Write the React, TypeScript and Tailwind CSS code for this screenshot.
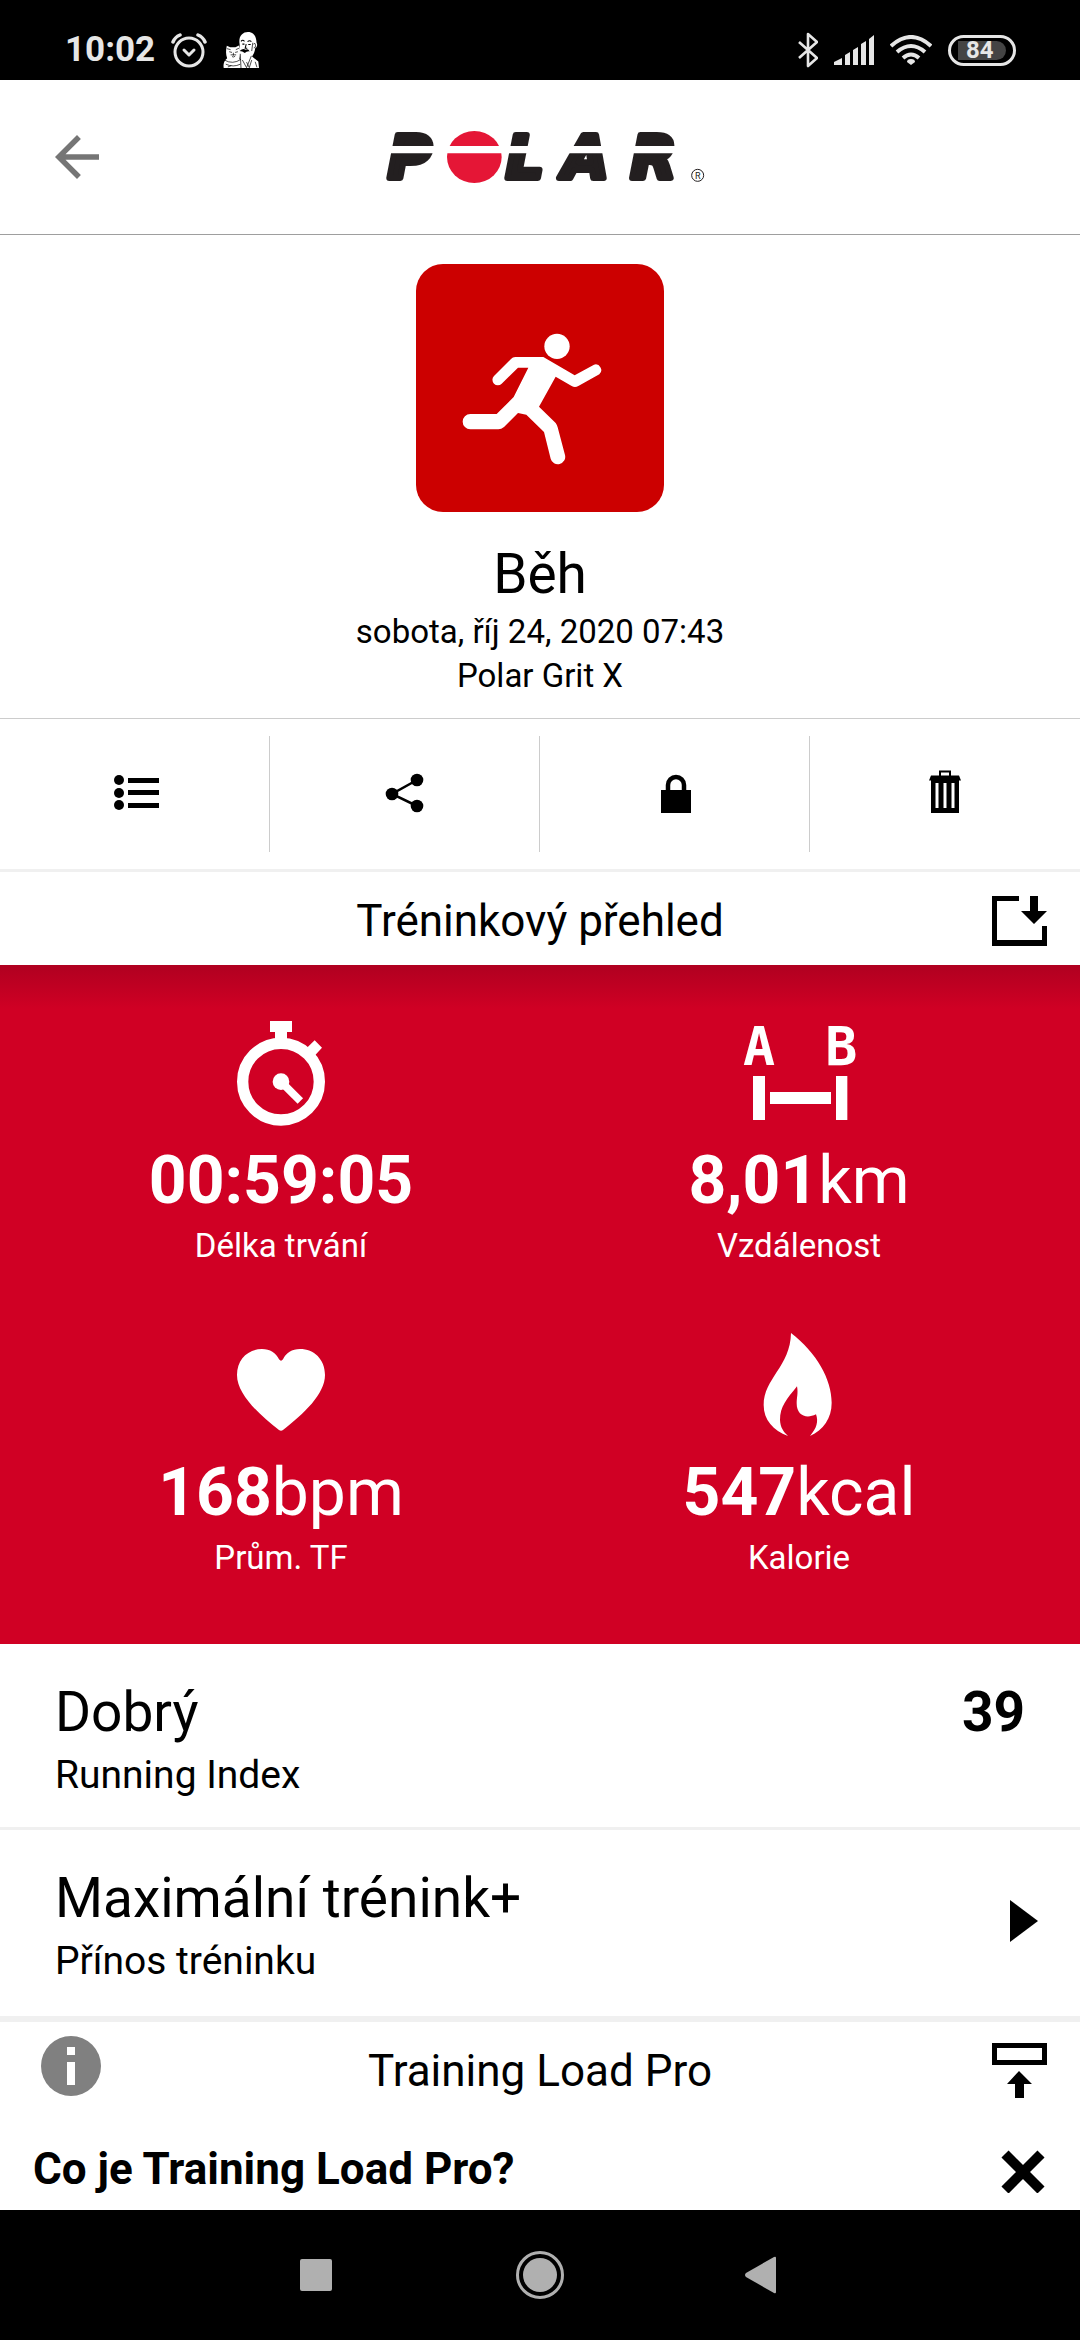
import type { ReactNode } from 'react'

function StatusBar() {
  return (
    <div className="flex h-20 items-center justify-between bg-black pt-5 pr-16 pl-[65px] text-[#e6e6e6]">
      <div className="flex items-center gap-4">
        <span className="text-[35px] leading-10 font-bold">10:02</span>
        <svg className="size-9" viewBox="0 0 36 36" fill="none" stroke="currentColor" strokeWidth="3" strokeLinecap="round">
          <circle cx="18" cy="20" r="14" />
          <path d="M13 18l5 5 5-5" strokeLinejoin="round" />
          <path d="M2 10Q4 5 9 3M34 10Q32 5 27 3" strokeWidth="3.5" />
        </svg>
        <svg className="size-9" viewBox="642 97 104 104">
          <path d="M690 132C686 110 698 97 714 97C730 97 738 108 739 128C742 132 741 142 735 144C734 154 730 162 726 168L744 182L746 201H690Z" fill="#fff" />
          <path d="M644 201C642 186 648 178 654 173C650 162 650 150 653 137L663 141H678L688 136C693 150 692 165 688 174C697 182 698 194 694 201Z" fill="#fff" />
          <g fill="none" stroke="#000" strokeWidth="2">
            <path d="M653 145L664 148M688 144L679 148M660 154l8 2M677 156l8-2M664 163h16M672 157v8M668 168q5 3 9-1" />
            <path d="M646 178q24 14 48-2M650 190q22 10 42 0M656 198l10-4M692 160L694 201" />
            <path d="M694 124q5-6 10 0M713 125q6-6 11 0M698 132h6M715 133h7M709 132l-3 12h6" strokeWidth="3" />
            <path d="M730 132q5-6 6 3t-5 8M728 128l-3 24M698 178l12 22 14-34M710 184l8 16M725 178l-7 22M735 183l5 16" />
          </g>
          <path d="M690 152Q700 142 707 148Q715 144 719 153Q710 152 705 158Q698 152 690 152Z" fill="#000" />
        </svg>
      </div>
      <div className="flex items-center gap-4">
        <svg className="h-9 w-5" viewBox="0 0 20 36" fill="none" stroke="currentColor" strokeWidth="2.6" strokeLinejoin="round">
          <path d="M1 10l18 16-9 8V2l9 8L1 26" />
        </svg>
        <svg className="h-[30px] w-10" viewBox="0 0 40 30" fill="currentColor">
          <path d="M0 30v-3l8-4v7zM11 30V20l5-3v13zM19 30V15l5-3v18zM27 30V9l5-3v24zM35 30V4l5-4v30z" />
        </svg>
        <svg className="h-[30px] w-[42px]" viewBox="0 0 42 30" fill="none" stroke="currentColor" strokeWidth="4">
          <path d="M1 11Q21-7 41 11M7 17Q21 5 35 17M13 23Q21 16 29 23" />
          <path d="M21 30l-4-3q0-3 4-3t4 3z" fill="currentColor" stroke="none" />
        </svg>
        <div className="flex h-[31px] w-[68px] items-center justify-center rounded-full border-3 border-current">
          <span className="flex h-[19px] w-12 items-center rounded-r-full bg-[#444] pl-2 text-2xl font-bold">84</span>
        </div>
      </div>
    </div>
  )
}

function Logo() {
  return (
    <svg className="h-[90px] w-[360px]" viewBox="0 6 1080 270" role="img" aria-label="Polar">
      <g
        className="font-['DejaVu_Sans',sans-serif] text-[178px] font-bold italic"
        fill="#231f20"
        stroke="#231f20"
        strokeWidth="18"
        strokeLinejoin="round"
      >
        <text x="84" y="205">P</text>
        <text x="438" y="205">L</text>
        <text x="608" y="205">A</text>
        <text x="812" y="205">R</text>
      </g>
      <ellipse cx="343" cy="141" rx="82" ry="78" fill="#e51636" />
      <path d="M40 108H1000V130H40Z" fill="#fff" />
      <circle cx="1013" cy="196" r="18" fill="none" stroke="#231f20" strokeWidth="3" />
      <text x="1005" y="206" className="text-[27px]" fill="#231f20">R</text>
    </svg>
  )
}

function Header() {
  return (
    <header className="grid h-[155px] grid-cols-[1fr_auto_1fr] items-center border-b border-[#9e9e9e] bg-white">
      <button type="button" aria-label="Zpět" className="ml-11 w-fit text-[#757575]">
        <svg className="size-[66px]" viewBox="0 0 24 24" fill="currentColor">
          <path d="M20 11H7.83l5.59-5.59L12 4l-8 8 8 8 1.41-1.41L7.83 13H20v-2z" />
        </svg>
      </button>
      <Logo />
    </header>
  )
}

function Activity() {
  return (
    <section className="flex flex-col items-center border-b border-[#ccc] pt-[29px] pb-5">
      <svg className="size-[248px] rounded-[27px] bg-[#c00]" viewBox="48 42 744 744" fill="#fff">
        <circle cx="471" cy="289" r="38" />
        <path d="M346 321H430L524 376L582 344A17 17 0 0 1 598 373L535 408Q525 414 515 408L467 380L417 470L467 519Q471 524 473 532L495 615A22 22 0 0 1 452 626L432 546L379 494L354 489L312 531Q304 538 295 538H211A23 23 0 0 1 211 492H290L341 441L385 353H354L305 401A16 16 0 0 1 282 378L333 327Q338 321 346 321Z" />
      </svg>
      <h1 className="mt-[30px] text-[55px] leading-16">Běh</h1>
      <p className="mt-1 text-[33px] leading-11">sobota, říj 24, 2020 07:43</p>
      <p className="text-[33px] leading-11">Polar Grit X</p>
    </section>
  )
}

const actions: Array<{ label: string; icon: ReactNode }> = [
  {
    label: 'Seznam',
    icon: (
      <>
        <circle cx="8" cy="10" r="5" />
        <circle cx="8" cy="23" r="5" />
        <circle cx="8" cy="35" r="5" />
        <path d="M17 8h31v5H17zM17 20h31v5H17zM17 33h31v5H17z" />
      </>
    ),
  },
  {
    label: 'Sdílet',
    icon: (
      <>
        <path d="M36 10L11 24l25 12" fill="none" stroke="currentColor" strokeWidth="2.5" />
        <circle cx="11" cy="24" r="6.3" />
        <circle cx="36" cy="10" r="6.3" />
        <circle cx="36" cy="36" r="6.3" />
      </>
    ),
  },
  {
    label: 'Soukromí',
    icon: (
      <>
        <path d="M10 20h30v23H10z" />
        <path d="M17 22v-7a8 8 0 0 1 16 0v7" fill="none" stroke="currentColor" strokeWidth="4.5" />
      </>
    ),
  },
  {
    label: 'Smazat',
    icon: (
      <>
        <path d="M19 6V1.5h10V6" fill="none" stroke="currentColor" strokeWidth="2" />
        <path d="M10 5.5h28l2 5H8z" />
        <path d="M10 10h28v33H10zM14.5 13v25h3V13zM22.5 13v25h3V13zM30.5 13v25h3V13z" fillRule="evenodd" />
      </>
    ),
  },
]

function Actions() {
  return (
    <nav className="grid grid-cols-4 divide-x divide-[#ccc] border-b-3 border-[#f0f0f0] py-[17px]">
      {actions.map((action) => (
        <button key={action.label} type="button" aria-label={action.label} className="flex h-[116px] items-center justify-center">
          <svg className="size-12" viewBox="0 0 48 48" fill="currentColor">{action.icon}</svg>
        </button>
      ))}
    </nav>
  )
}

function SectionTitle({ title, left, right }: { title: string; left?: ReactNode; right: ReactNode }) {
  return (
    <div className="grid h-[93px] grid-cols-[1fr_auto_1fr] items-center px-[33px] pt-1">
      <div className="flex self-start pt-2.5 pl-2">{left}</div>
      <h2 className="text-[44px] leading-[52px]">{title}</h2>
      <div className="flex justify-end">{right}</div>
    </div>
  )
}

function Stat({ icon, value, unit, label }: { icon: ReactNode; value: string; unit?: string; label: string }) {
  return (
    <div className="flex flex-col items-center">
      {icon}
      <p className="mt-3.5 text-[66px] leading-[78px]">
        <b>{value}</b>{unit}
      </p>
      <p className="mt-1.5 text-[33px] leading-10">{label}</p>
    </div>
  )
}

function Stats() {
  return (
    <section className="grid grid-cols-2 gap-y-16 bg-[#d00024] bg-linear-to-b from-[#b00020] to-[#d00024] to-[44px] px-[22px] pt-[53px] pb-[66px] text-white">
      <Stat
        value="00:59:05"
        label="Délka trvání"
        icon={
          <svg className="size-[110px]" viewBox="438 84 330 330" fill="currentColor">
            <circle cx="603" cy="275" r="115" fill="none" stroke="currentColor" strokeWidth="34" />
            <path d="M570 93h66v33h-15v30h-36v-30h-15zM704 151l22 22-18 20-12 14-26-22 14-15z" />
            <circle cx="603" cy="275" r="25" />
            <path d="M603 275l58 58" stroke="currentColor" strokeWidth="23" />
          </svg>
        }
      />
      <Stat
        value="8,01"
        unit="km"
        label="Vzdálenost"
        icon={
          <svg className="size-[110px] overflow-visible" viewBox="312 84 330 330" fill="currentColor">
            <g className="font-['DejaVu_Sans_Mono',monospace] text-[160px] font-bold" textAnchor="middle">
              <text x="357" y="225">A</text>
              <text x="604" y="225">B</text>
            </g>
            <path d="M339 258h36v132h-36zM588 258h34v132h-34zM390 306h183v36H390z" />
          </svg>
        }
      />
      <Stat
        value="168"
        unit="bpm"
        label="Prům. TF"
        icon={
          <svg className="size-[110px]" viewBox="438 60 330 330" fill="currentColor">
            <path d="M597 148C588 128 570 117 546 117C504 117 471 148 471 195C471 252 535 312 597 360Q603 365 609 360C671 312 735 252 735 195C735 148 702 117 660 117C636 117 618 128 609 148Q603 156 597 148Z" />
          </svg>
        }
      />
      <Stat
        value="547"
        unit="kcal"
        label="Kalorie"
        icon={
          <svg className="size-[110px]" viewBox="312 60 330 330" fill="currentColor">
            <path d="M453 69C530 128 575 208 575 278C575 325 550 360 510 378C530 355 536 335 528 313C500 327 470 318 470 280C470 262 475 250 471 229C440 268 420 290 420 330C421 352 430 365 444 378C400 362 371 330 371 285C371 205 451 170 453 69Z" />
          </svg>
        }
      />
    </section>
  )
}

function Results() {
  return (
    <>
      <section className="flex justify-between border-b-3 border-[#f0f0f0] px-[55px] pt-9 pb-[29px]">
        <div>
          <p className="text-[55px] leading-16">Dobrý</p>
          <p className="mt-2 text-[39px] leading-[46px]">Running Index</p>
        </div>
        <b className="text-[55px] leading-16">39</b>
      </section>
      <button
        type="button"
        className="flex w-full items-center justify-between border-b-6 border-[#f0f0f0] pt-7 pr-[42px] pb-8 pl-[55px] text-left"
      >
        <span className="pt-2">
          <span className="block text-[55px] leading-16">Maximální trénink+</span>
          <span className="mt-2 block text-[39px] leading-[46px]">Přínos tréninku</span>
        </span>
        <svg className="h-[42px] w-7" viewBox="0 0 28 42" fill="currentColor">
          <path d="M0 0l28 21L0 42z" />
        </svg>
      </button>
    </>
  )
}

function NavBar() {
  return (
    <nav className="flex h-[130px] items-center justify-center gap-44 bg-black text-[#b0b0b0]">
      <button type="button" aria-label="Poslední aplikace">
        <svg className="size-12" viewBox="0 0 48 48" fill="currentColor">
          <rect x="8" y="8" width="32" height="32" rx="2" />
        </svg>
      </button>
      <button type="button" aria-label="Domů">
        <svg className="size-12" viewBox="0 0 48 48" fill="currentColor">
          <circle cx="24" cy="24" r="22.5" fill="none" stroke="currentColor" strokeWidth="3" />
          <circle cx="24" cy="24" r="17" />
        </svg>
      </button>
      <button type="button" aria-label="Zpět">
        <svg className="size-12" viewBox="0 0 48 48" fill="currentColor">
          <path d="M36 7v34q0 2-2 1L6 26q-2-2 0-4L34 6q2-1 2 1z" />
        </svg>
      </button>
    </nav>
  )
}

export default function App() {
  return (
    <div className="flex min-h-screen flex-col bg-white font-[Roboto,sans-serif] text-black">
      <StatusBar />
      <Header />
      <main className="flex-1">
        <Activity />
        <Actions />
        <SectionTitle
          title="Tréninkový přehled"
          right={
            <button type="button" aria-label="Rozbalit">
              <svg className="h-[50px] w-[55px]" viewBox="0 0 55 50" fill="currentColor">
                <path d="M0 0h27v5H5v39h45V30h5v20H0z" />
                <path d="M38 0h8v15h9L42 28 29 15h9z" />
              </svg>
            </button>
          }
        />
        <Stats />
        <Results />
        <SectionTitle
          title="Training Load Pro"
          left={
            <button type="button" aria-label="Informace">
              <svg className="size-[60px]" viewBox="0 0 60 60">
                <circle cx="30" cy="30" r="30" fill="#808080" />
                <path d="M26 11h8v8h-8zM26 26h8v23h-8z" fill="#fff" />
              </svg>
            </button>
          }
          right={
            <button type="button" aria-label="Sbalit">
              <svg className="size-[55px]" viewBox="0 0 55 55" fill="currentColor">
                <path d="M0 0h55v22H0zM5 5v12h45V5z" fillRule="evenodd" />
                <path d="M27 28l13 13h-8v14h-9V41h-8z" />
              </svg>
            </button>
          }
        />
        <div className="flex items-center justify-between px-[33px] pt-7 pb-[15px]">
          <h3 className="text-[44px] leading-[52px] font-bold">Co je Training Load Pro?</h3>
          <button type="button" aria-label="Zavřít">
            <svg className="size-12" viewBox="0 0 48 48" fill="none" stroke="currentColor" strokeWidth="10">
              <path d="M6 9l36 36M42 9L6 45" />
            </svg>
          </button>
        </div>
      </main>
      <NavBar />
    </div>
  )
}
